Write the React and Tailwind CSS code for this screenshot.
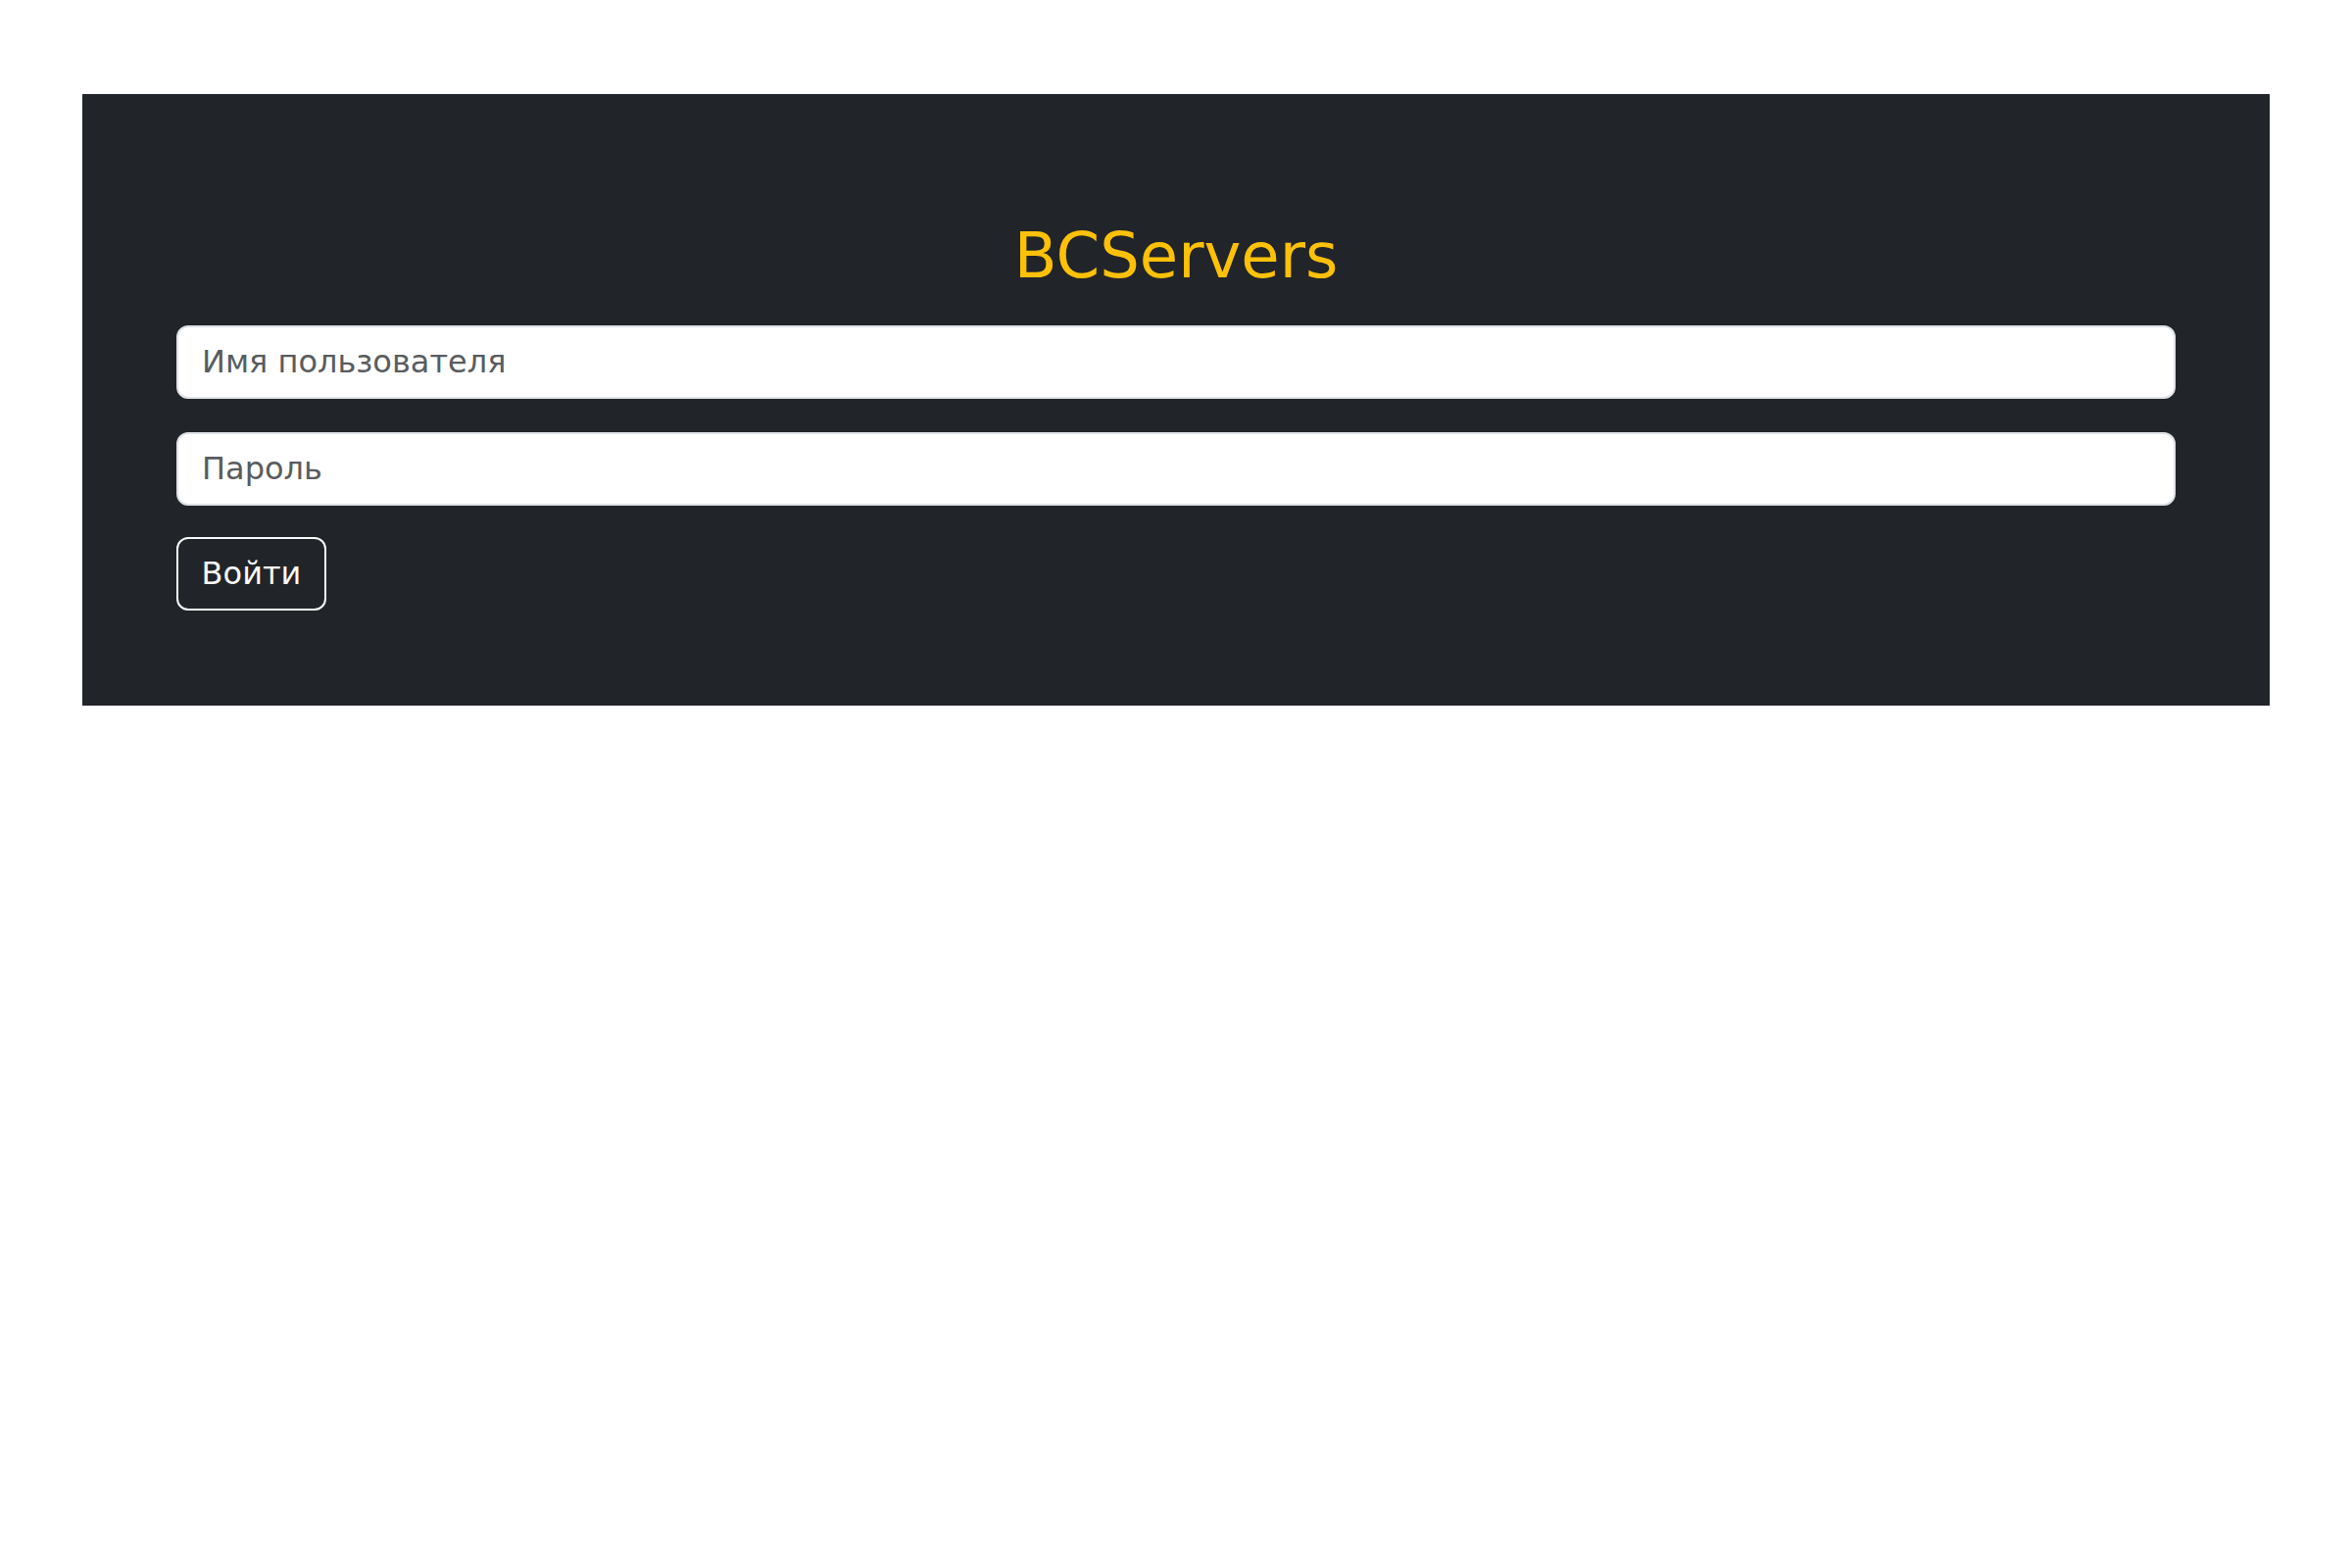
import React, { useState } from "react";

const App = () => {
  const [username, setUsername] = useState("");
  const [password, setPassword] = useState("");

  return (
    <div
      className="min-h-screen bg-white pt-[96px] px-[84px]"
      style={{ fontFamily: '"DejaVu Sans", Verdana, sans-serif' }}
    >
      <div className="bg-[#212529] px-[96px] pt-[127px] pb-[97px]">
        <h1 className="text-center text-[64px] leading-[1.2] text-[#ffc107] mb-[32px]">
          BCServers
        </h1>
        <form className="flex flex-col" onSubmit={(e) => e.preventDefault()}>
          <input
            type="text"
            value={username}
            onChange={(e) => setUsername(e.target.value)}
            placeholder="Имя пользователя"
            className="h-[75px] w-full rounded-[12px] border-2 border-[#dee2e6] bg-white px-[24px] text-[32px] text-[#212529] placeholder:text-[#595c5f] outline-none"
          />
          <input
            type="password"
            value={password}
            onChange={(e) => setPassword(e.target.value)}
            placeholder="Пароль"
            className="mt-[34px] h-[75px] w-full rounded-[12px] border-2 border-[#dee2e6] bg-white px-[24px] text-[32px] text-[#212529] placeholder:text-[#595c5f] outline-none"
          />
          <div className="mt-[32px]">
            <button
              type="submit"
              className="h-[75px] w-[153px] rounded-[12px] border-2 border-[#f8f9fa] text-[32px] text-[#f8f9fa]"
            >
              Войти
            </button>
          </div>
        </form>
      </div>
    </div>
  );
};

export default App;
